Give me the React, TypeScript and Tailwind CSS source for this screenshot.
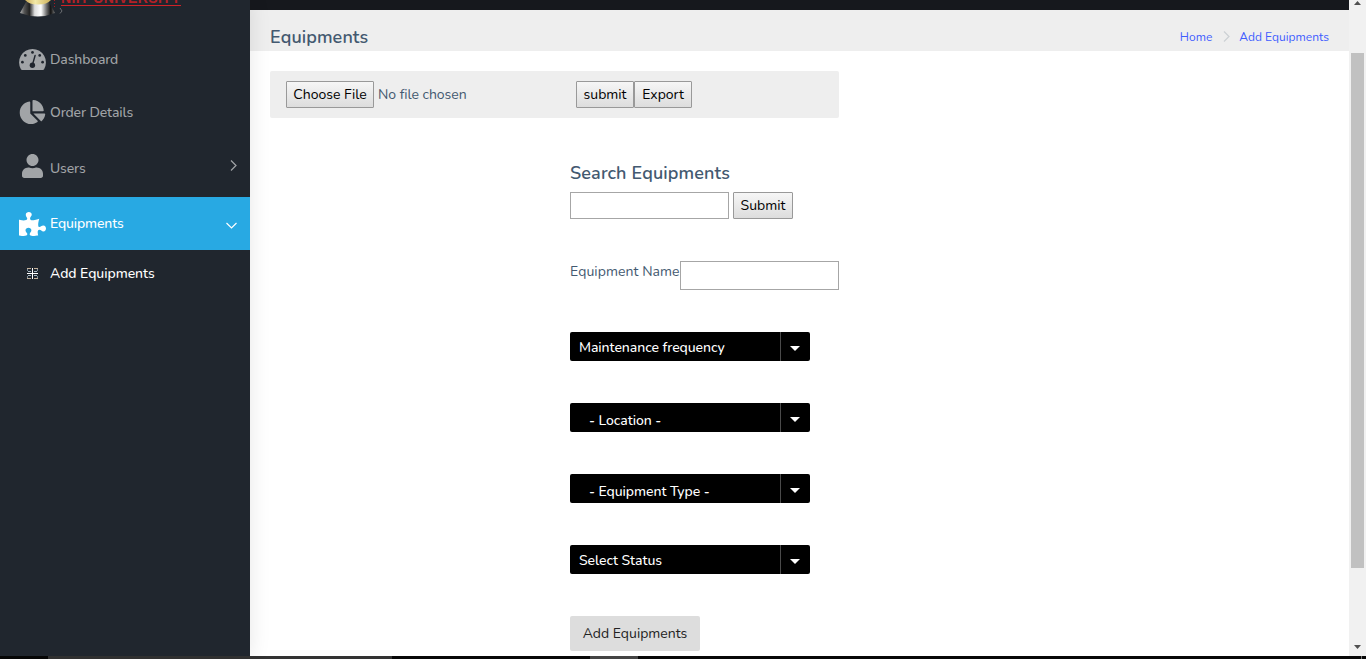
import React from "react";
import { FaChartPie, FaUser, FaPuzzlePiece } from "react-icons/fa";

function Caret() {
  return (
    <svg width="10" height="5" viewBox="0 0 10 5" fill="#fff">
      <path d="M0 0h10L5 5z" />
    </svg>
  );
}

function Select({ label, className }: { label: string; className: string }) {
  return (
    <div className="mb-[42px] flex h-[29px] w-[240px] rounded-[2px] bg-black text-sm font-medium tracking-[-0.06px] text-white">
      <div className={`w-[211px] whitespace-nowrap border-r border-[#4a4a4a] ${className}`}>
        {label}
      </div>
      <div className="flex w-[29px] items-center justify-center pt-1 pr-px">
        <Caret />
      </div>
    </div>
  );
}

function Logo() {
  return (
    <svg width="46" height="18" viewBox="0 0 46 18">
      <defs>
        <linearGradient id="base">
          <stop offset="0" stopColor="#b5b5b5" />
          <stop offset=".12" stopColor="#555" />
          <stop offset=".27" stopColor="#222" />
          <stop offset=".42" stopColor="#ddd" />
          <stop offset=".6" stopColor="#fff" />
          <stop offset=".75" stopColor="#777" />
          <stop offset=".88" stopColor="#111" />
          <stop offset="1" stopColor="#777" />
        </linearGradient>
        <linearGradient id="globe">
          <stop offset="0" stopColor="#c9a955" />
          <stop offset=".4" stopColor="#f3e9a8" />
          <stop offset="1" stopColor="#cdb05a" />
        </linearGradient>
      </defs>
      <path d="M7 2h23l6 11q-17 7-35 0z" fill="url(#base)" />
      <path d="M6 0h26q-4 4.500-13 4.500T6 0" fill="url(#globe)" />
      <path d="M35.500 0v8" stroke="#a61c24" strokeDasharray="1 2" />
      <path d="m41 8 2 3-2 2.500" fill="none" stroke="#6c6f73" />
    </svg>
  );
}

function GaugeIcon() {
  return (
    <svg className="-mt-px" width="27" height="21" viewBox="0 0 27 21">
      <path d="M13.500 0A13.500 13.500 0 0 0 1.900 20.300Q2.300 21 3.200 21H23.800Q24.700 21 25.100 20.300A13.500 13.500 0 0 0 13.500 0z" fill="currentColor" />
      <g fill="#20262e">
        <circle cx="3.400" cy="13.200" r="1.350" />
        <circle cx="6.300" cy="6.400" r="1.350" />
        <circle cx="13.500" cy="3.400" r="1.350" />
        <circle cx="20.700" cy="6.400" r="1.350" />
        <circle cx="23.600" cy="13.200" r="1.350" />
        <circle cx="13.400" cy="16.200" r="2.700" />
      </g>
      <path d="m13.400 16 2.700-9.500" stroke="#20262e" strokeWidth="1.400" strokeLinecap="round" />
    </svg>
  );
}

function GridIcon() {
  return (
    <svg width="11" height="11" viewBox="0 0 11 11" shapeRendering="crispEdges">
      <path d="M0 0h4v1H0zM7 0h4v1H7zM0 10h4v1H0zM7 10h4v1H7z" fill="#c4b29c" />
      <path d="M0 1h1v2H0zM10 1h1v2h-1zM0 8h1v2H0zM10 8h1v2h-1z" fill="#7f8f9c" />
      <path d="M1 3h3v1H1zM7 3h3v1H7zM1 7h3v1H1zM7 7h3v1H7z" fill="#a9bac6" />
      <path d="M5 0h1v11H5zM0 5h11v1H0z" fill="#fff" />
    </svg>
  );
}

const btn =
  "h-[27px] rounded-[1px] border border-[#999] bg-linear-to-b from-[#f6f6f6] to-[#dddddd] text-center text-sm leading-[25px] text-black whitespace-nowrap";

export default function App() {
  return (
    <div className="flex h-[659px] w-[1366px] flex-col overflow-hidden bg-white font-[Nunito,Lato,sans-serif] text-sm text-[#435970]">
      <div className="flex h-[656px]">
        <aside className="z-10 h-full w-[250px] shrink-0 bg-[#20262e] font-medium tracking-[-0.14px] text-[#a1a4a7] shadow-[0_0_20px_rgba(0,0,0,0.1)]">
          <div className="flex h-[33px] pl-[19px]">
            <Logo />
            <div className="-mt-[11px] -ml-1 h-[17px] border-b border-[#cf2228] font-['Liberation_Sans'] text-sm leading-[18px] font-bold tracking-[0.37px] whitespace-nowrap text-[#b32027]">
              NIIT UNIVERSITY
            </div>
          </div>
          <nav>
            <div className="flex h-[53px] items-center pl-[19px]">
              <GaugeIcon />
              <span className="ml-1">Dashboard</span>
            </div>
            <div className="flex h-[53px] items-center pl-[19px]">
              <FaChartPie className="-mt-0.5 h-6 w-[27px]" />
              <span className="ml-1">Order Details</span>
            </div>
            <div className="flex h-[58px] items-center pl-[19px]">
              <FaUser className="-mt-1 h-6 w-[27px]" />
              <span className="mt-px ml-1">Users</span>
              <svg className="-mt-[6px] mr-[13px] ml-auto" width="7" height="11" viewBox="0 0 7 11" fill="none" stroke="currentColor" strokeWidth="1.2">
                <path d="m1 .5 5 5-5 5" />
              </svg>
            </div>
            <div className="flex h-[53px] items-center bg-[#28a9e3] pl-[19px] text-white">
              <FaPuzzlePiece className="h-6 w-[27px]" />
              <span className="ml-1">Equipments</span>
              <svg className="mt-[3px] mr-[13px] ml-auto" width="11" height="7" viewBox="0 0 11 7" fill="none" stroke="currentColor" strokeWidth="1.2">
                <path d="m.5 1 5 5 5-5" />
              </svg>
            </div>
            <div className="flex h-[46px] items-center pl-[27px] text-white">
              <GridIcon />
              <span className="mt-0.5 ml-3 tracking-[-0.05px]">Add Equipments</span>
            </div>
          </nav>
        </aside>

        <main className="w-[1099px] shrink-0">
          <div className="h-[10px] bg-[#16181d]" />
          <header className="flex h-[41px] items-center bg-[#eeeeee] pt-3 pl-5">
            <h1 className="text-lg font-semibold tracking-[0.1px]">Equipments</h1>
            <div className="mr-5 ml-auto flex items-center text-xs text-[#3f5cff]">
              <span>Home</span>
              <svg className="mr-[9px] ml-[11px]" width="7" height="11" viewBox="0 0 7 11" fill="none" stroke="#ccd0d4" strokeWidth="1.2">
                <path d="m1 .5 5 5-5 5" />
              </svg>
              <span>Add Equipments</span>
            </div>
          </header>

          <div className="mt-5 ml-5 flex h-[47px] w-[569px] items-start rounded-[2px] bg-[#eeeeee] pt-[10px] pl-4">
            <div className={`w-[88px] ${btn}`}>Choose File</div>
            <span className="mt-1 ml-1 w-[198px] tracking-[-0.04px]">No file chosen</span>
            <div className={`w-[58px] ${btn}`}>submit</div>
            <div className={`w-[58px] ${btn}`}>Export</div>
          </div>

          <div className="mt-[41px] ml-[320px]">
            <h2 className="text-lg leading-7 font-semibold tracking-[0.12px]">Search Equipments</h2>
            <div className="mt-[5px] flex gap-1">
              <input className="h-[27px] w-[159px] border border-[#a6a6a6] bg-white" />
              <button className={`w-[60px] ${btn}`}>Submit</button>
            </div>
            <div className="mt-[42px] mb-[42px] flex h-[29px]">
              <label className="mt-px w-[110px] tracking-[0.07px] whitespace-nowrap">Equipment Name</label>
              <input className="h-[29px] w-[159px] border border-[#a6a6a6] bg-white" />
            </div>
            <Select label="Maintenance frequency" className="pl-[9px] leading-[31px]" />
            <Select label="- Location -" className="pl-[19px] leading-[36px]" />
            <Select label="- Equipment Type -" className="pl-[19px] leading-[36px]" />
            <Select label="Select Status" className="pl-[9px] leading-[31px]" />
            <button className="h-[35px] w-[130px] rounded-[2px] bg-[#dddddd] text-[#222]">Add Equipments</button>
          </div>
        </main>

        <div className="flex w-[17px] shrink-0 flex-col items-center bg-[#f1f1f1]">
          <svg className="mt-px" width="7" height="4" viewBox="0 0 7 4" fill="#505050">
            <path d="M3.500 0 7 4H0z" />
          </svg>
          <div className="mt-12 h-[515px] w-[13px] bg-[#c1c1c1]" />
          <svg className="mt-[77px]" width="7" height="4" viewBox="0 0 7 4" fill="#505050">
            <path d="M0 0h7L3.500 4z" />
          </svg>
        </div>
      </div>
      <div className="flex h-[3px] bg-[#070707]">
        <div className="ml-12 w-[344px] bg-[#333]" />
        <div className="ml-[198px] w-12 bg-[#444]" />
        <div className="mr-1 ml-auto w-px bg-[#777]" />
      </div>
    </div>
  );
}
